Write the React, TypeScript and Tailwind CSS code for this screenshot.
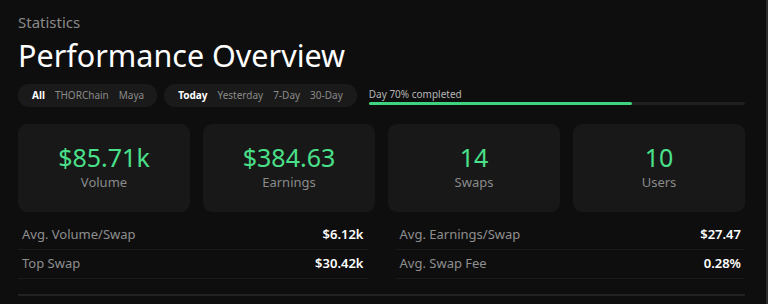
import React from "react";

const cards = [
  { v: "$85.71k", l: "Volume" },
  { v: "$384.63", l: "Earnings" },
  { v: "14", l: "Swaps" },
  { v: "10", l: "Users" },
];

const rowsLeft = [
  { l: "Avg. Volume/Swap", v: "$6.12k" },
  { l: "Top Swap", v: "$30.42k" },
];
const rowsRight = [
  { l: "Avg. Earnings/Swap", v: "$27.47" },
  { l: "Avg. Swap Fee", v: "0.28%" },
];

function Rows({ rows }: { rows: { l: string; v: string }[] }) {
  return (
    <div className="flex flex-col">
      {rows.map((r) => (
        <div
          key={r.l}
          className="flex h-[29px] items-center justify-between border-b border-[#1a1a1a] px-[4px]"
        >
          <span className="text-[13px] text-[#8f8f8f]">{r.l}</span>
          <span className="text-[13px] font-semibold text-white">{r.v}</span>
        </div>
      ))}
    </div>
  );
}

export default function App() {
  return (
    <div
      className="h-[304px] w-[768px] overflow-hidden border-r-2 border-[#2c2c2c] bg-[#0e0e0e] pl-[18px] pr-[21px] pt-[11px]"
      style={{ fontFamily: '"Noto Sans", "Open Sans", sans-serif' }}
    >
      <div className="text-[15px] leading-[22px] text-[#8a8a8a]">Statistics</div>
      <div className="mt-[3px] text-[30.5px] leading-[38px] text-white">Performance Overview</div>
      <div className="mt-[10px] flex items-center">
        <div className="flex h-[23px] items-center gap-[10px] rounded-[11px] bg-[#1a1a1a] pl-[14px] pr-[13px] text-[10px]">
          <span className="font-bold text-white">All</span>
          <span className="text-[#8a8a8a]">THORChain</span>
          <span className="text-[#8a8a8a]">Maya</span>
        </div>
        <div className="ml-[7px] flex h-[23px] items-center gap-[10px] rounded-[11px] bg-[#1a1a1a] pl-[14px] pr-[14px] text-[10px]">
          <span className="font-bold text-white">Today</span>
          <span className="text-[#8a8a8a]">Yesterday</span>
          <span className="text-[#8a8a8a]">7-Day</span>
          <span className="text-[#8a8a8a]">30-Day</span>
        </div>
        <div className="ml-[12px] flex flex-1 flex-col">
          <span className="text-[10px] leading-[14px] text-[#b5b5b5]">Day 70% completed</span>
          <div className="mt-[1px] h-[3px] w-full rounded-full bg-[#1f1f1f]">
            <div className="h-full rounded-full bg-[#3fd47f]" style={{ width: "70%" }} />
          </div>
        </div>
      </div>
      <div className="mt-[17px] grid grid-cols-4 gap-[13px]">
        {cards.map((c) => (
          <div
            key={c.l}
            className="flex h-[88px] flex-col items-center justify-center rounded-[9px] bg-[#181818] pb-[5px]"
          >
            <span className="text-[25px] leading-[32px] text-[#4ae08a]">{c.v}</span>
            <span className="mt-[1px] text-[13px] leading-[16px] text-[#8a8a8a]">{c.l}</span>
          </div>
        ))}
      </div>
      <div className="mt-[9px] grid grid-cols-2 gap-[28px]">
        <Rows rows={rowsLeft} />
        <Rows rows={rowsRight} />
      </div>
      <div className="mt-[15px] h-[2px] bg-[#222222]" />
    </div>
  );
}
